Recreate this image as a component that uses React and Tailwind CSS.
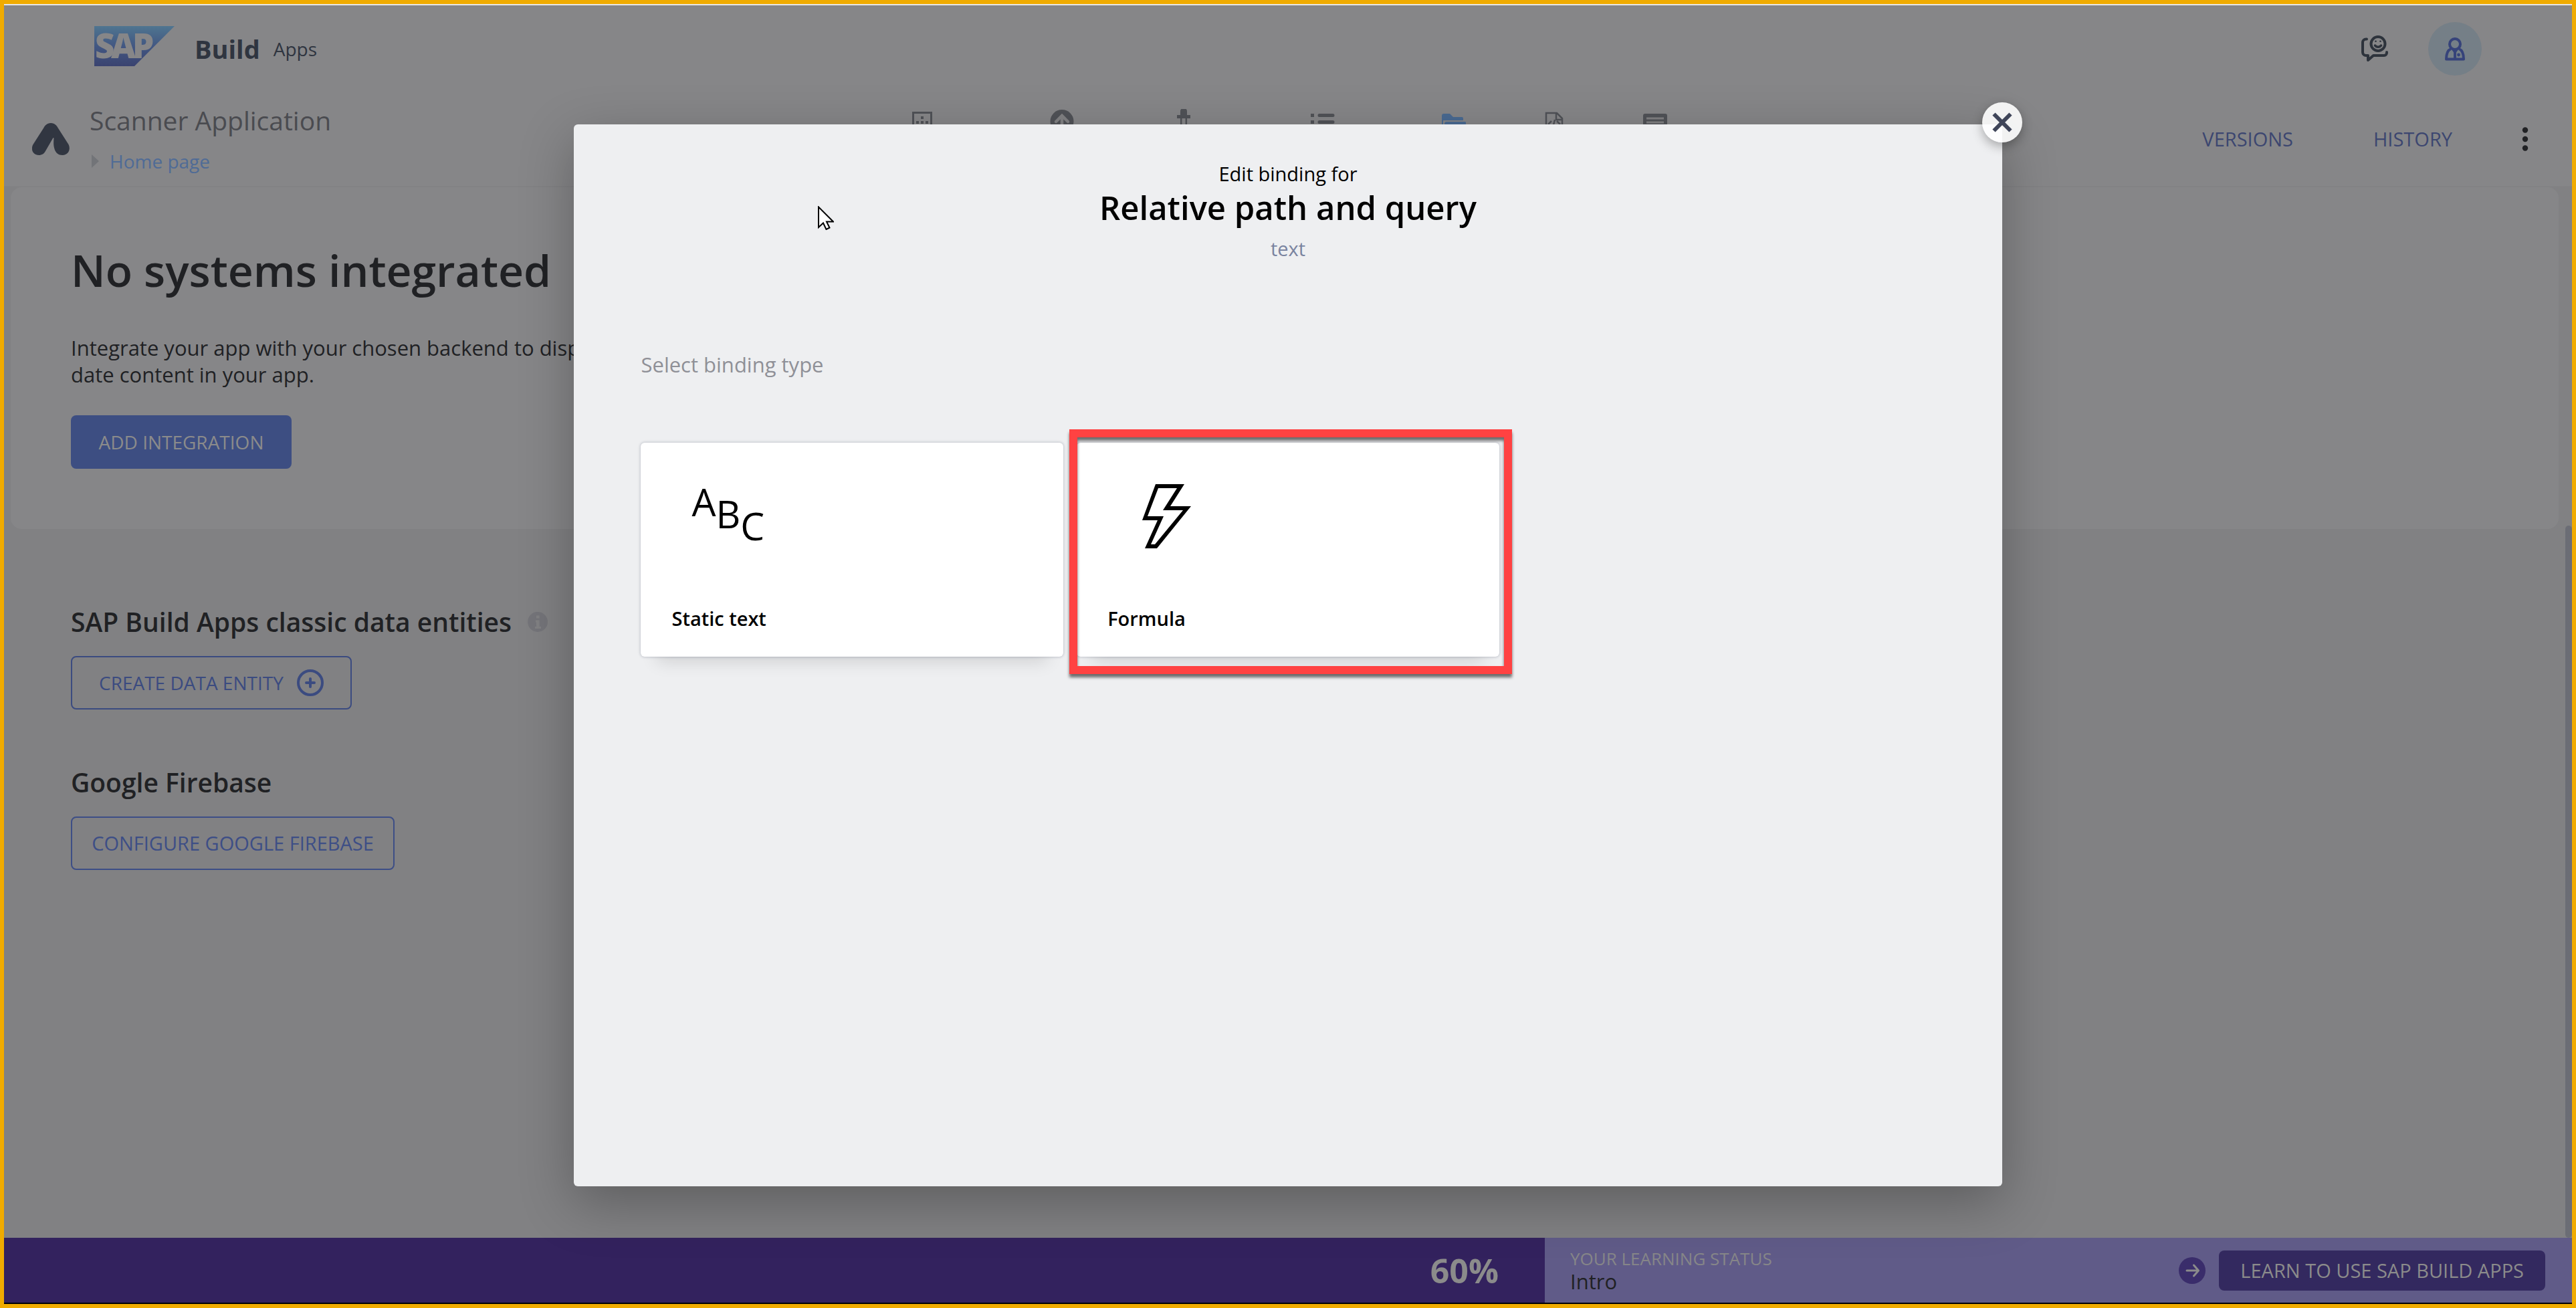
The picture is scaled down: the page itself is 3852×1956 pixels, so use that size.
import React from "react";

function SapLogo() {
  return (
    <svg className="-mt-2.5 -mb-0.5 h-20 w-[120px] shrink-0" viewBox="0 -10 120 80" role="img" aria-label="SAP">
      <defs>
        <linearGradient id="sapBlue" x1="0" y1="0" x2="0" y2="1">
          <stop offset="0" stopColor="#4f7590" />
          <stop offset="0.5" stopColor="#425782" />
          <stop offset="1" stopColor="#3a4370" />
        </linearGradient>
      </defs>
      <path d="M0 0H120L60 60H0Z" fill="url(#sapBlue)" />
      <text x="1 25 57" y="48" fontFamily="Open Sans, sans-serif" fontWeight="800" fontSize="51" fill="#868688">
        SAP
      </text>
    </svg>
  );
}

function AppGyverMark() {
  return (
    <svg className="h-12 w-14 shrink-0" viewBox="0 0 56 48" aria-hidden="true">
      <path
        d="M28 0c6 0 9 4 10.500 7l16 25c3.500 7 0 16-9 16-8 0-11-5-12.500-11-1-4-1-8-.5-14.500l-1-.5-11 19c-2.500 5-6 7-10.500 7C1 48-2.500 39 1.500 32l16-25C19 4 22 0 28 0Z"
        fill="#313641"
      />
    </svg>
  );
}

function ChatIcon() {
  return (
    <svg className="h-10 w-10" viewBox="0 0 40 40" fill="none" stroke="#2d333c" strokeWidth="4" strokeLinecap="round" strokeLinejoin="round" aria-hidden="true">
      <path d="M8 5.500H7a5 5 0 0 0-5 5V25a5 5 0 0 0 5 5h3v7l8-7h16a4 4 0 0 0 4-4v-1" />
      <circle cx="25" cy="12.500" r="10.500" />
      <path d="M20.500 15c2 3 7 3 9 0" strokeWidth="3.500" />
      <circle cx="21.500" cy="8.800" r="1.300" fill="#2d333c" stroke="none" />
      <circle cx="28.500" cy="8.800" r="1.300" fill="#2d333c" stroke="none" />
    </svg>
  );
}

function PersonIcon() {
  return (
    <svg className="h-9 w-[30px]" viewBox="0 0 30 36" fill="none" stroke="#36437a" strokeWidth="4" aria-hidden="true">
      <circle cx="15" cy="11" r="8" />
      <path d="M9 18C4 20 2 25 2 33.500H28C28 25 26 20 21 18" strokeLinejoin="round" />
      <path d="M9 17.500h12L16.500 24h-3Z" fill="#36437a" stroke="none" />
      <path d="M15 22v12" />
      <circle cx="20.500" cy="27" r="2.400" fill="#36437a" stroke="none" />
    </svg>
  );
}

const navItems = [
  {
    label: "Canvas",
    width: "w-[220px]",
    icon: (
      <>
        <rect x="4.500" y="5.500" width="27" height="30" fill="none" stroke="#505257" strokeWidth="3" />
        <path d="M16 11h4v4h-4zM9 18h4v4H9zM16 18h4v4h-4zM23 18h4v4h-4z" fill="#505257" />
      </>
    ),
  },
  {
    label: "Launch",
    width: "w-[198px]",
    icon: (
      <>
        <circle cx="18" cy="18.500" r="17.500" fill="#505257" />
        <path d="M9 19l9-9 9 9M18 11v18" fill="none" stroke="#828284" strokeWidth="4.500" strokeLinecap="round" />
      </>
    ),
  },
  {
    label: "Theme",
    width: "w-[166px]",
    icon: (
      <>
        <path d="M13 9V3a5 4.500 0 0 1 10 0v6h5v5H8V9Z" fill="#505257" />
        <path d="M14.200 14v18M21.800 14v18" stroke="#505257" strokeWidth="2.500" />
      </>
    ),
  },
  {
    label: "Navigation",
    width: "w-[250px]",
    icon: (
      <>
        <path d="M0 7h5v5H0zM0 17h5v5H0zM0 27h5v5H0z" fill="#505257" />
        <path d="M13 9.500h20M13 19.500h20M13 29.500h20" stroke="#505257" strokeWidth="5" strokeLinecap="round" />
      </>
    ),
  },
  {
    label: "Data",
    width: "w-[142px]",
    icon: <path d="M0 34V10q0-3 3-3h9l5 5h13q2 0 2 2v3H2v17ZM4 34V22q0-3 3-3h27q3 0 3 3v12Z" fill="#4a6a92" />,
  },
  {
    label: "Code",
    width: "w-[158px]",
    icon: (
      <path d="M6 34V6h16l8 8v20M21 6v10h9M14 18l-5 5M19 16l-3 12M22 18l5 5" fill="none" stroke="#505257" strokeWidth="2.500" />
    ),
  },
  {
    label: "Logs",
    width: "w-[144px]",
    icon: (
      <>
        <rect x="0" y="7" width="36" height="28" rx="3" fill="#505257" />
        <path d="M5 14h26M5 20h26M5 26h26" stroke="#818183" strokeWidth="3" />
      </>
    ),
  },
];

function Header() {
  return (
    <header className="flex h-[130px] items-center justify-between bg-[#868688] px-[135px]">
      <div className="flex items-center">
        <SapLogo />
        <span className="ml-[30px] text-[38px] leading-[60px] font-bold text-[#2f3540]">Build</span>
        <span className="ml-5 text-[28px] leading-[60px] text-[#2f3540]">Apps</span>
      </div>
      <div className="flex items-center gap-[60px]">
        <button type="button" aria-label="Feedback">
          <ChatIcon />
        </button>
        <button type="button" aria-label="Profile" className="flex size-20 items-center justify-center rounded-full bg-[#757f87]">
          <PersonIcon />
        </button>
      </div>
    </header>
  );
}

function Toolbar() {
  return (
    <div className="flex h-[142px] items-center border-b-2 border-[#828284] bg-[#868688]">
      <div className="flex flex-1 items-center pl-[42px]">
        <AppGyverMark />
        <div className="ml-[30px]">
          <p className="text-[39px] leading-[50px] text-[#4a4b50]">Scanner Application</p>
          <div className="mt-4 flex items-center gap-4 pl-[3px]">
            <svg className="h-5 w-[11px]" viewBox="0 0 11 20" aria-hidden="true">
              <path d="M0 0L11 10L0 20Z" fill="#727478" />
            </svg>
            <a href="#home" className="text-[28px] leading-10 text-[#4f6b96]">
              Home page
            </a>
          </div>
        </div>
      </div>
      <nav className="flex self-start pt-[25px] pr-3.5">
        {navItems.map((item) => (
          <button key={item.label} type="button" aria-label={item.label} className={`flex justify-center ${item.width}`}>
            <svg className="size-9" viewBox="0 0 36 36" aria-hidden="true">
              {item.icon}
            </svg>
          </button>
        ))}
      </nav>
      <div className="flex flex-1 items-center justify-end pr-[65px] text-[29px] leading-10 text-[#3c4670]">
        <button type="button">VERSIONS</button>
        <button type="button" className="ml-[120px]">
          HISTORY
        </button>
        <button type="button" aria-label="More" className="ml-[104px]">
          <svg className="h-9 w-2.5" viewBox="0 0 10 36" fill="#202124" aria-hidden="true">
            <circle cx="5" cy="4.500" r="4.200" />
            <circle cx="5" cy="18" r="4.200" />
            <circle cx="5" cy="31.500" r="4.200" />
          </svg>
        </button>
      </div>
    </div>
  );
}

function DataPage() {
  return (
    <main className="relative flex-1 bg-[#818183] pr-5 pl-2.5">
      <section className="rounded-2xl bg-[#868688] pt-[83px] pb-[90px] pl-[90px]">
        <h1 className="text-[66px] leading-[80px] font-semibold text-[#202124]">No systems integrated</h1>
        <p className="mt-[57px] text-[31px] leading-10 text-[#202124]">
          Integrate your app with your chosen backend to display
          <br />
          date content in your app.
        </p>
        <button type="button" className="mt-[41px] flex h-20 w-[330px] items-center justify-center rounded-lg bg-[#3d4e82] text-[28px] text-[#8b8b8b]">
          ADD INTEGRATION
        </button>
      </section>
      <section className="pt-[114px] pl-[90px]">
        <div className="flex items-center gap-6">
          <h2 className="text-[39px] leading-[50px] font-semibold text-[#202124]">SAP Build Apps classic data entities</h2>
          <svg className="size-[30px]" viewBox="0 0 30 30" aria-hidden="true">
            <circle cx="15" cy="15" r="15" fill="#747479" />
            <path d="M13 5.500h4.500v4H13zM12 12.500h5.500V22H20v3h-9v-3h2v-6.500h-1Z" fill="#818183" />
          </svg>
        </div>
        <button type="button" className="mt-[26px] flex h-20 items-center rounded-lg border-2 border-[#3b4b80] px-10 text-[28px] text-[#3b4b80]">
          CREATE DATA ENTITY
          <svg className="ml-5 size-10" viewBox="0 0 40 40" fill="none" stroke="#3b4b80" strokeWidth="4" strokeLinecap="round" aria-hidden="true">
            <circle cx="20" cy="20" r="18" />
            <path d="M14 20h12M20 14v12" />
          </svg>
        </button>
      </section>
      <section className="pt-[84px] pl-[90px]">
        <h2 className="text-[39px] leading-[50px] font-semibold text-[#202124]">Google Firebase</h2>
        <button type="button" className="mt-[26px] flex h-20 w-[484px] items-center justify-center rounded-lg border-2 border-[#3d4e86] text-[29px] text-[#3d4e86]">
          CONFIGURE GOOGLE FIREBASE
        </button>
      </section>
      <div className="absolute top-[506px] right-0 bottom-0 w-2.5 rounded-full bg-[#6b6d75]" />
    </main>
  );
}

function LearningBar() {
  return (
    <footer className="flex h-[97px] bg-[#605b88]">
      <div className="flex w-[60%] items-center justify-end bg-[#33225e] pr-[69px]">
        <span className="text-[50px] leading-[60px] font-bold text-[#8b8b8b]">60%</span>
      </div>
      <div className="flex flex-1 items-center pr-10 pl-[38px]">
        <div className="flex-1">
          <p className="text-[26px] leading-8 text-[#868688]">YOUR LEARNING STATUS</p>
          <p className="text-[31px] leading-9 text-[#202124]">Intro</p>
        </div>
        <button type="button" aria-label="Next">
          <svg className="size-10" viewBox="0 0 40 40" aria-hidden="true">
            <circle cx="20" cy="20" r="20" fill="#3a2d6b" />
            <path d="M12 20h17M22.500 12l7 8-7 8" fill="none" stroke="#8b8b8b" strokeWidth="3" strokeLinecap="round" strokeLinejoin="round" />
          </svg>
        </button>
        <button type="button" className="ml-5 h-[60px] rounded-lg bg-[#33295f] px-8 text-[29px] text-[#8b8b8b]">
          LEARN TO USE SAP BUILD APPS
        </button>
      </div>
    </footer>
  );
}

function BindingCard({ label, highlighted, children }) {
  return (
    <div className="relative">
      <button
        type="button"
        className="flex h-80 w-full flex-col items-start justify-between rounded-md bg-white pt-14 pb-[37px] text-left shadow-[0_0_4px_rgba(20,30,60,0.3),0_32px_24px_-24px_rgba(0,0,0,0.12)]"
      >
        {children}
        <span className="ml-[46px] text-[29px] leading-10 font-semibold text-black">{label}</span>
      </button>
      {highlighted && (
        <div className="pointer-events-none absolute -top-5 -right-[19px] -bottom-[26px] -left-[11px] border-[12px] border-[#ff4242] drop-shadow-[0_5px_2px_rgba(0,0,0,0.55)]" />
      )}
    </div>
  );
}

function BindingDialog() {
  return (
    <div className="absolute inset-0 flex justify-center pt-[180px] pb-[176px]">
      <div
        role="dialog"
        aria-modal="true"
        aria-labelledby="binding-title"
        className="relative w-[55.6%] rounded-md bg-[#eeeff1] px-[100px] pt-[54px] shadow-[0_24px_80px_rgba(0,0,0,0.28)]"
      >
        <div className="text-center">
          <p className="text-[29px] leading-10 text-black">Edit binding for</p>
          <h2 id="binding-title" className="text-[49px] leading-[60px] font-semibold text-black">
            Relative path and query
          </h2>
          <p className="mt-3 text-[29px] leading-10 text-[#7a84a0]">text</p>
        </div>
        <p className="mt-[133px] text-[31px] leading-10 text-[#8f9097]">Select binding type</p>
        <div className="mt-[97px] grid grid-cols-3 gap-5">
          <BindingCard label="Static text">
            <span className="ml-[76px] flex items-start text-[57px] leading-[64px] text-black">
              <span>A</span>
              <span className="mt-[18px]">B</span>
              <span className="mt-9">C</span>
            </span>
          </BindingCard>
          <BindingCard label="Formula" highlighted>
            <svg className="mt-1.5 ml-[76px] h-24 w-[120px]" viewBox="0 0 120 96" aria-hidden="true">
              <path
                fillRule="evenodd"
                d="M42 0H85L64 33H95L44 96H26L45 54H22ZM46 6L30 48H54L35 90H41L83 39H53L74 6Z"
              />
            </svg>
          </BindingCard>
        </div>
        <button
          type="button"
          aria-label="Close"
          className="absolute -top-[33px] -right-[30px] flex size-[60px] items-center justify-center rounded-full bg-white/90 shadow-[0_6px_16px_rgba(0,0,0,0.3)]"
        >
          <svg className="size-[30px]" viewBox="0 0 30 30" stroke="#3f4559" strokeWidth="6" aria-hidden="true">
            <path d="M2.500 2.500l25 25M27.500 2.500l-25 25" />
          </svg>
        </button>
      </div>
    </div>
  );
}

export default function App() {
  return (
    <div className="relative flex min-h-screen flex-col border-[6px] border-[#f0ab00] font-['Open_Sans',sans-serif]">
      <div className="flex flex-1 flex-col border-t-2 border-b-2 border-t-[#e6e6e6] border-b-black">
        <Header />
        <Toolbar />
        <DataPage />
        <LearningBar />
      </div>
      <BindingDialog />
      <svg className="pointer-events-none absolute top-[302px] left-[1217px] h-9 w-6" viewBox="0 0 24 36" aria-hidden="true">
        <path d="M1 1.500V32l7-6.500 4.500 9.500 5-2.500-4.500-9H23Z" fill="#fff" stroke="#000" strokeWidth="2" />
      </svg>
    </div>
  );
}
